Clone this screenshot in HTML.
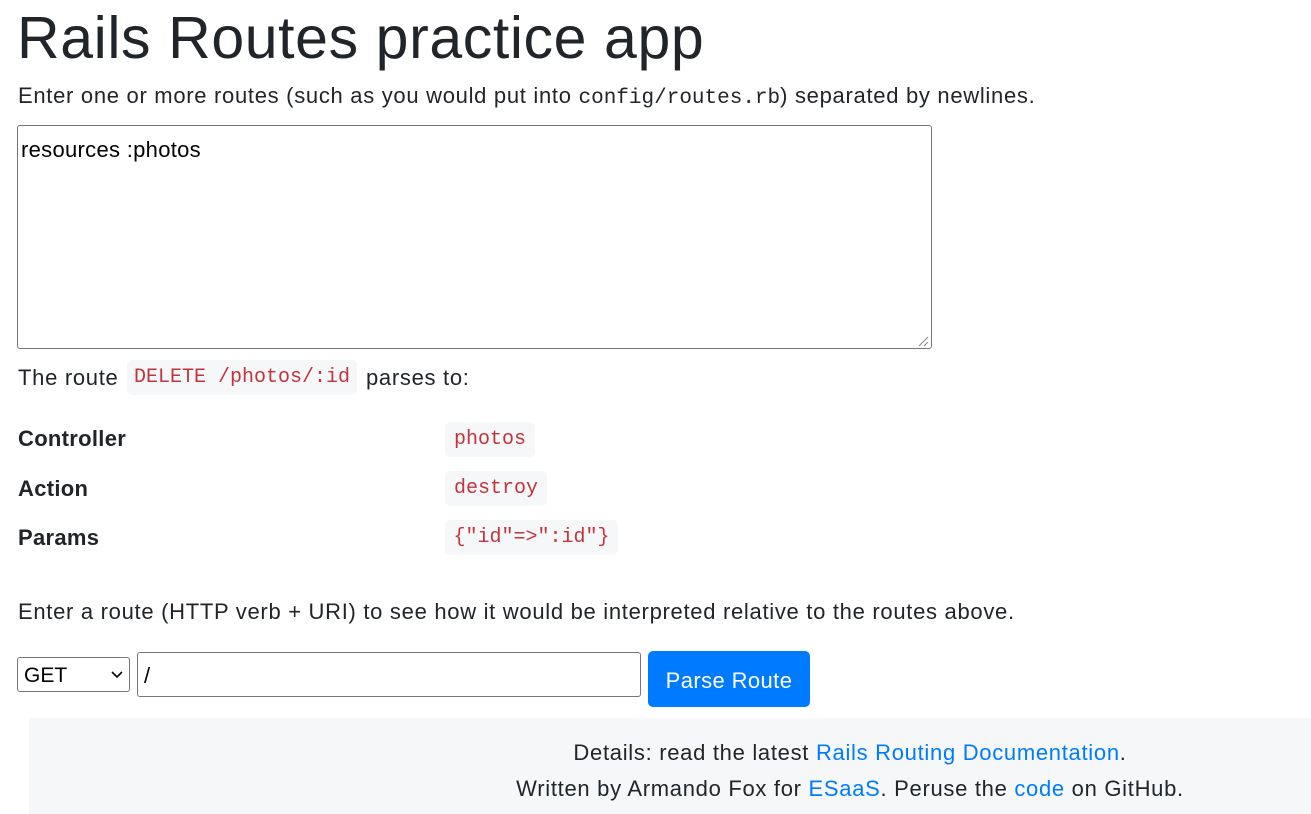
<!DOCTYPE html>
<html><head><meta charset="utf-8"><style>
body{margin:0;width:1311px;height:814px;overflow:hidden;background:#fff;font-family:"Liberation Sans",sans-serif;color:#212529;position:relative}
.a{position:absolute;white-space:nowrap}
.t{font-size:22px;line-height:28px;letter-spacing:0.7px}
.m{font-family:"Liberation Mono",monospace;letter-spacing:0}
.c{position:absolute;background:#f6f7f8;border-radius:5px;color:#c0343f;font-family:"Liberation Mono",monospace;font-size:20px;line-height:35px;text-align:center}
a{color:#007bff;text-decoration:none}
</style></head><body>
<div class="a" style="left:17px;top:4px;font-size:59px;line-height:68px;letter-spacing:0.6px;color:#212529">Rails Routes practice app</div>
<div class="a t" style="left:18px;top:82px">Enter one or more routes (such as you would put into <span class="m" style="font-size:21px">config/routes.rb</span>) separated by newlines.</div>
<div class="a" style="left:17px;top:125px;width:913px;height:222px;border:1px solid #767676;border-radius:3px"></div>
<div class="a t" style="left:21px;top:136px;color:#000;letter-spacing:0.3px">resources :photos</div>
<svg class="a" style="left:916px;top:334px" width="14" height="14"><path d="M12 3L3 12M12 8L8 12" stroke="#888" stroke-width="1"/></svg>
<div class="a t" style="left:18px;top:364px">The route</div>
<div class="c" style="left:127px;top:360px;width:230px;height:35px">DELETE /photos/:id</div>
<div class="a t" style="left:366px;top:364px">parses to:</div>
<div class="a t" style="left:18px;top:425px;font-weight:bold;letter-spacing:0.3px">Controller</div>
<div class="c" style="left:445px;top:422px;width:90px">photos</div>
<div class="a t" style="left:18px;top:475px;font-weight:bold;letter-spacing:0.3px">Action</div>
<div class="c" style="left:445px;top:471px;width:102px">destroy</div>
<div class="a t" style="left:18px;top:524px;font-weight:bold;letter-spacing:0.3px">Params</div>
<div class="c" style="left:445px;top:520px;width:173px">{"id"=&gt;":id"}</div>
<div class="a t" style="left:18px;top:598px">Enter a route (HTTP verb + URI) to see how it would be interpreted relative to the routes above.</div>
<div class="a" style="left:17px;top:657px;width:111px;height:33px;border:1px solid #767676;border-radius:3px;font-size:21px;line-height:35px;color:#000"><span style="margin-left:6px">GET</span>
<svg style="position:absolute;left:93px;top:13px" width="12" height="8"><path d="M1 1L6 6L11 1" stroke="#000" stroke-width="1.6" fill="none"/></svg></div>
<div class="a" style="left:137px;top:652px;width:502px;height:43px;border:1px solid #767676;border-radius:3px;font-size:22px;line-height:46px;color:#000"><span style="margin-left:6px">/</span></div>
<div class="a" style="left:648px;top:651px;width:162px;height:56px;background:#007bff;border-radius:5px;color:#fff;font-size:22px;line-height:59px;text-align:center;letter-spacing:0.4px">Parse Route</div>
<div class="a" style="left:29px;top:718px;width:1282px;height:96px;background:#f6f7f9"></div>
<div class="a t" style="left:350px;top:739px;width:1000px;text-align:center">Details: read the latest <a>Rails Routing Documentation</a>.</div>
<div class="a t" style="left:350px;top:775px;width:1000px;text-align:center">Written by Armando Fox for <a>ESaaS</a>. Peruse the <a>code</a> on GitHub.</div>
</body></html>
